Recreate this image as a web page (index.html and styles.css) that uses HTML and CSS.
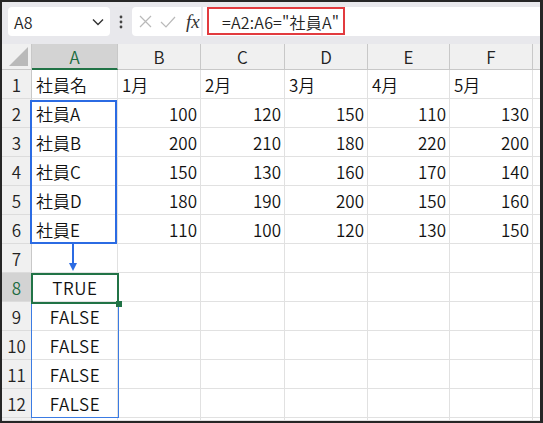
FILE: index.html
```html
<!DOCTYPE html>
<html lang="ja">
<head>
<meta charset="utf-8">
<link rel="stylesheet" href="styles.css">
</head>
<body>
<div class="window">
  <div class="toolbar">
    <div class="namebox">
      <span>A8</span>
      <svg class="chev" width="12" height="8" viewBox="0 0 12 8"><polyline points="1,1.5 6,6.5 11,1.5" fill="none" stroke="#333" stroke-width="1.4"/></svg>
    </div>
    <div class="kebab">
      <svg width="4" height="14" viewBox="0 0 4 14"><circle cx="2" cy="2" r="1.4" fill="#444"/><circle cx="2" cy="7" r="1.4" fill="#444"/><circle cx="2" cy="12" r="1.4" fill="#444"/></svg>
    </div>
    <div class="fxbox">
      <svg width="13" height="13" viewBox="0 0 13 13"><path d="M1 1 L12 12 M12 1 L1 12" stroke="#b9b9b9" stroke-width="1.2" fill="none"/></svg>
      <svg class="check" width="16" height="12" viewBox="0 0 16 12"><polyline points="1,6 6,11 15,1" stroke="#b9b9b9" stroke-width="1.2" fill="none"/></svg>
      <span class="fx">fx</span>
    </div>
    <div class="formula"><span>=A2:A6="社員A"</span></div>
    <div class="redbox"></div>
  </div>
  <div class="sheet">
    <div class="corner"></div>
    <div class="ch sel">A</div><div class="ch">B</div><div class="ch">C</div><div class="ch">D</div><div class="ch">E</div><div class="ch">F</div><div class="ch end"></div>

    <div class="rh">1</div><div class="c">社員名</div><div class="c">1月</div><div class="c">2月</div><div class="c">3月</div><div class="c">4月</div><div class="c">5月</div><div class="c"></div>
    <div class="rh">2</div><div class="c">社員A</div><div class="c n">100</div><div class="c n">120</div><div class="c n">150</div><div class="c n">110</div><div class="c n">130</div><div class="c"></div>
    <div class="rh">3</div><div class="c">社員B</div><div class="c n">200</div><div class="c n">210</div><div class="c n">180</div><div class="c n">220</div><div class="c n">200</div><div class="c"></div>
    <div class="rh">4</div><div class="c">社員C</div><div class="c n">150</div><div class="c n">130</div><div class="c n">160</div><div class="c n">170</div><div class="c n">140</div><div class="c"></div>
    <div class="rh">5</div><div class="c">社員D</div><div class="c n">180</div><div class="c n">190</div><div class="c n">200</div><div class="c n">150</div><div class="c n">160</div><div class="c"></div>
    <div class="rh">6</div><div class="c">社員E</div><div class="c n">110</div><div class="c n">100</div><div class="c n">120</div><div class="c n">130</div><div class="c n">150</div><div class="c"></div>
    <div class="rh">7</div><div class="c"></div><div class="c"></div><div class="c"></div><div class="c"></div><div class="c"></div><div class="c"></div><div class="c"></div>
    <div class="rh sel">8</div><div class="c b">TRUE</div><div class="c"></div><div class="c"></div><div class="c"></div><div class="c"></div><div class="c"></div><div class="c"></div>
    <div class="rh">9</div><div class="c b">FALSE</div><div class="c"></div><div class="c"></div><div class="c"></div><div class="c"></div><div class="c"></div><div class="c"></div>
    <div class="rh">10</div><div class="c b">FALSE</div><div class="c"></div><div class="c"></div><div class="c"></div><div class="c"></div><div class="c"></div><div class="c"></div>
    <div class="rh">11</div><div class="c b">FALSE</div><div class="c"></div><div class="c"></div><div class="c"></div><div class="c"></div><div class="c"></div><div class="c"></div>
    <div class="rh">12</div><div class="c b">FALSE</div><div class="c"></div><div class="c"></div><div class="c"></div><div class="c"></div><div class="c"></div><div class="c"></div>
    <div class="rh"></div><div class="c"></div><div class="c"></div><div class="c"></div><div class="c"></div><div class="c"></div><div class="c"></div><div class="c"></div>

    <div class="spill"></div>
    <div class="bluebox"></div>
    <div class="arrow"><div class="shaft"></div><div class="head"></div></div>
    <div class="active"><div class="handle"></div></div>
  </div>
</div>
</body>
</html>
```

FILE: styles.css
```css
* { box-sizing: border-box; margin: 0; padding: 0; }
html, body { background: #262626; }
body {
  width: 543px;
  height: 423px;
  padding: 2px 3px 2px 2px;
  overflow: hidden;
  font-family: "Noto Sans CJK JP", "Noto Sans", sans-serif;
  font-weight: 350;
  color: #1a1a1a;
}
.window {
  width: 538px;
  height: 419px;
  background: #fff;
  display: flex;
  flex-direction: column;
  overflow: hidden;
}

/* toolbar */
.toolbar {
  position: relative;
  height: 42px;
  flex: none;
  background: #e8e8ec;
  display: flex;
  align-items: flex-start;
  padding: 5px 0 0 6px;
}
.namebox {
  width: 102px;
  height: 29px;
  background: #fff;
  border-radius: 4px;
  display: flex;
  align-items: center;
  justify-content: space-between;
  padding: 0 6px 0 6px;
  font-size: 16px;
  color: #222;
}
.kebab {
  width: 22px;
  height: 29px;
  display: flex;
  align-items: center;
  justify-content: center;
}
.fxbox {
  width: 69px;
  height: 29px;
  background: #fff;
  border-radius: 4px 0 0 4px;
  display: flex;
  align-items: center;
  padding-left: 7px;
  gap: 8px;
}
.fx {
  font-family: "Liberation Serif", serif;
  font-style: italic;
  font-weight: 400;
  font-size: 19px;
  color: #333;
  margin-left: 2px;
}
.formula {
  flex: 1;
  height: 29px;
  background: #fff;
  margin-left: 2px;
  display: flex;
  align-items: center;
  padding-left: 19px;
  font-size: 16px;
  letter-spacing: 0.2px;
  color: #222;
}
.redbox {
  position: absolute;
  left: 205px;
  top: 5px;
  width: 138px;
  height: 28px;
  border: 2px solid #e23b3f;
}

/* sheet */
.sheet {
  position: relative;
  flex: 1;
  display: grid;
  grid-template-columns: 30px 86px 83px 84px 83px 82px 83px 7px;
  grid-template-rows: 26px repeat(12, 29px) 3px;
  font-size: 16px;
}
.corner {
  position: relative;
  background: #f0f0f0;
  border-right: 1px solid #c8c8c8;
  border-bottom: 1px solid #c8c8c8;
}
.corner::after {
  content: "";
  position: absolute;
  right: 3px;
  bottom: 3px;
  width: 0;
  height: 0;
  border-left: 19px solid transparent;
  border-bottom: 19px solid #b9b9b9;
}
.ch {
  background: #f0f0f0;
  border-right: 1px solid #c8c8c8;
  border-bottom: 1px solid #c8c8c8;
  display: flex;
  align-items: center;
  justify-content: center;
  color: #222;
  font-size: 17px;
}
.ch.end { border-right: none; }
.ch.sel {
  background: #d3d3d3;
  color: #1a6b40;
  border-bottom: 2px solid #217346;
}
.rh {
  background: #f0f0f0;
  border-right: 1px solid #c8c8c8;
  border-bottom: 1px solid #dcdcdc;
  display: flex;
  align-items: center;
  justify-content: center;
  color: #222;
  font-size: 17px;
}
.rh.sel {
  background: #d3d3d3;
  color: #1a6b40;
}
.c {
  border-right: 1px solid #e1e1e1;
  border-bottom: 1px solid #e1e1e1;
  display: flex;
  align-items: center;
  padding: 0 3px 0 4px;
  white-space: nowrap;
  overflow: hidden;
  font-size: 17px;
  color: #111;
}
.c.n { justify-content: flex-end; }
.c.b { justify-content: center; letter-spacing: 0.6px; }

/* overlays */
.bluebox {
  position: absolute;
  left: 28px;
  top: 56px;
  width: 87px;
  height: 144px;
  border: 2px solid #2b6be3;
}
.arrow {
  position: absolute;
  left: 66px;
  top: 200px;
  width: 9px;
  display: flex;
  flex-direction: column;
  align-items: center;
}
.shaft {
  width: 2px;
  height: 19px;
  background: #2b6be3;
}
.head {
  width: 0;
  height: 0;
  border-left: 4.5px solid transparent;
  border-right: 4.5px solid transparent;
  border-top: 8px solid #2b6be3;
}
.spill {
  position: absolute;
  left: 29px;
  top: 229px;
  width: 88px;
  height: 145px;
  border: 1px solid #3b7be3;
}
.active {
  position: absolute;
  left: 29px;
  top: 229px;
  width: 88px;
  height: 31px;
  border: 2px solid #217346;
}
.handle {
  position: absolute;
  right: -5px;
  bottom: -5px;
  width: 6px;
  height: 6px;
  background: #217346;
}
```
